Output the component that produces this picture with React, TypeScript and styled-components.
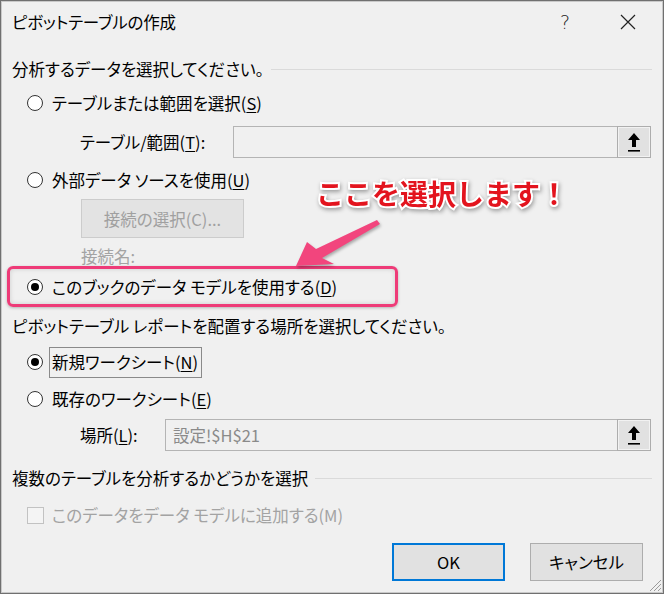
import React from "react";
import styled, { createGlobalStyle } from "styled-components";

const Global = createGlobalStyle`
  html, body { margin: 0; padding: 0; background: #f0f0f0; }
  body {
    font-family: "Noto Sans CJK JP", "Noto Sans", sans-serif;
    font-feature-settings: "palt";
    color: #000;
  }
  * { box-sizing: border-box; }
`;

const Window = styled.div`
  position: relative;
  width: 664px;
  height: 594px;
  background: #f0f0f0;
  border: 1px solid #707070;
  box-shadow: inset 0 0 0 1px #c9c9c9;
  display: flex;
  flex-direction: column;
  overflow: hidden;
`;

const TitleBar = styled.div`
  height: 42px;
  display: flex;
  align-items: center;
  padding: 0 12px 0 11px;
  gap: 17px;
`;

const Title = styled.div`
  flex: 1;
  font-size: 16.5px;
  letter-spacing: -0.2px;
`;

const TitleButton = styled.div`
  width: 46px;
  height: 32px;
  display: flex;
  align-items: center;
  justify-content: center;
  font-family: "DejaVu Sans", sans-serif;
  font-weight: 300;
  font-size: 19px;
  color: #222;
`;

const Section = styled.div<{ $top: number }>`
  margin-top: ${(p) => p.$top}px;
  height: 24px;
  display: flex;
  align-items: center;
  padding: 0 11px 0 11px;
  font-size: 16.5px;
  white-space: nowrap;
`;

const SectionLine = styled.div`
  flex: 1;
  height: 1px;
  background: #dadada;
  margin-left: 7px;
`;

const OptionRow = styled.div<{ $top: number; $height?: number; $indent?: number }>`
  margin-top: ${(p) => p.$top}px;
  height: ${(p) => p.$height ?? 24}px;
  display: flex;
  align-items: center;
  padding-left: ${(p) => p.$indent ?? 26}px;
  font-size: 16.5px;
  white-space: nowrap;
`;

const Radio = styled.span<{ $checked?: boolean }>`
  width: 16px;
  height: 16px;
  border-radius: 50%;
  border: 1px solid #333;
  background: #fff;
  display: inline-flex;
  align-items: center;
  justify-content: center;
  margin-right: 9px;
  flex: none;
  &::after {
    content: "";
    width: 8px;
    height: 8px;
    border-radius: 50%;
    background: ${(p) => (p.$checked ? "#000" : "transparent")};
  }
`;

const CheckBox = styled.span`
  width: 17px;
  height: 17px;
  border: 1px solid #c2c2c2;
  background: #f4f4f4;
  margin-right: 8px;
  flex: none;
`;

const Label = styled.span<{ $disabled?: boolean }>`
  color: ${(p) => (p.$disabled ? "#a3a3a3" : "#000")};
`;

const FocusLabel = styled.span`
  display: inline-flex;
  align-items: center;
  height: 31px;
  padding: 0 3px 0 2px;
  margin-left: -3px;
  border: 1px solid #8a8a8a;
`;

const Key = styled.span`
  text-decoration: underline;
  text-underline-offset: 2px;
`;

const FieldRow = styled.div<{ $top: number; $labelWidth: number }>`
  margin-top: ${(p) => p.$top}px;
  height: 32px;
  display: grid;
  grid-template-columns: ${(p) => p.$labelWidth}px 1fr 34px;
  align-items: stretch;
  padding: 0 12px 0 79px;
  font-size: 16.5px;
`;

const FieldLabel = styled.div`
  display: flex;
  align-items: center;
  white-space: nowrap;
`;

const FieldInput = styled.div`
  border: 1px solid #b4b4b4;
  border-right: none;
  background: #f0f0f0;
  display: flex;
  align-items: center;
  padding-left: 7px;
  color: #8a8a8a;
  font-size: 16.5px;
`;

const PickButton = styled.div`
  border: 1px solid #adadad;
  background: #e1e1e1;
  box-shadow: inset 0 0 0 1px #f2f2f2;
  display: flex;
  align-items: center;
  justify-content: center;
`;

const ConnButton = styled.div`
  margin: 7px 0 0 80px;
  width: 163px;
  height: 39px;
  border: 1px solid #cccccc;
  background: #e3e3e3;
  color: #a0a0a0;
  font-size: 16.5px;
  display: flex;
  align-items: center;
  justify-content: center;
`;

const Highlight = styled.div`
  margin: -1px 0 0 6px;
  width: 391px;
  height: 41px;
  border: 3px solid #ee3b78;
  border-radius: 6px;
  box-shadow: 0 1px 3px rgba(0, 0, 0, 0.25), inset 0 0 5px rgba(0, 0, 0, 0.14);
  display: flex;
  align-items: center;
  padding-left: 17px;
  font-size: 16.5px;
  white-space: nowrap;
`;

const ButtonRow = styled.div`
  margin-top: 16px;
  height: 38px;
  display: flex;
  justify-content: flex-end;
  gap: 25px;
  padding-right: 20px;
`;

const DialogButton = styled.div<{ $default?: boolean }>`
  width: 113px;
  height: 38px;
  background: #e1e1e1;
  border: ${(p) => (p.$default ? "2px solid #0078d7" : "1px solid #adadad")};
  display: flex;
  align-items: center;
  justify-content: center;
  font-size: 16.5px;
`;

const Callout = styled.div`
  position: absolute;
  left: 315px;
  top: 172px;
  font-size: 28px;
  font-weight: 700;
  font-feature-settings: normal;
  color: #e3141e;
  -webkit-text-stroke: 4px #ffffff;
  paint-order: stroke fill;
  filter: drop-shadow(1px 2px 2px rgba(0, 0, 0, 0.35));
  white-space: nowrap;
`;

const ArrowSvg = styled.svg`
  position: absolute;
  left: 290px;
  top: 212px;
  filter: drop-shadow(1px 2px 1.5px rgba(0, 0, 0, 0.3));
`;

const Grip = styled.svg`
  position: absolute;
  right: 1px;
  bottom: 1px;
`;

const UpArrow = () => (
  <svg width="14" height="20" viewBox="0 0 14 20">
    <path d="M7 1 L13 8 L9 8 L9 15 L5 15 L5 8 L1 8 Z" fill="#000" />
    <rect x="1" y="18" width="12" height="1.6" fill="#000" />
  </svg>
);

export default function App() {
  return (
    <>
      <Global />
      <Window>
        <TitleBar>
          <Title>ピボットテーブルの作成</Title>
          <TitleButton>?</TitleButton>
          <TitleButton>
            <svg width="16" height="16" viewBox="0 0 16 16">
              <path d="M1 1 L15 15 M15 1 L1 15" stroke="#222" strokeWidth="1.2" />
            </svg>
          </TitleButton>
        </TitleBar>

        <Section $top={14}>
          分析するデータを選択してください。
          <SectionLine />
        </Section>

        <OptionRow $top={10}>
          <Radio />
          <Label>
            テーブルまたは範囲を選択(<Key>S</Key>)
          </Label>
        </OptionRow>

        <FieldRow $top={11} $labelWidth={153}>
          <FieldLabel>
            テーブル/範囲(<Key>T</Key>):
          </FieldLabel>
          <FieldInput />
          <PickButton>
            <UpArrow />
          </PickButton>
        </FieldRow>

        <OptionRow $top={10}>
          <Radio />
          <Label>
            外部データ&nbsp;ソースを使用(<Key>U</Key>)
          </Label>
        </OptionRow>

        <ConnButton>接続の選択(C)...</ConnButton>

        <OptionRow $top={7} $height={22} $indent={80}>
          <Label $disabled>接続名:</Label>
        </OptionRow>

        <Highlight>
          <Radio $checked />
          <Label>
            このブックのデータ モデルを使用する(<Key>D</Key>)
          </Label>
        </Highlight>

        <Section $top={7}>ピボットテーブル レポートを配置する場所を選択してください。</Section>

        <OptionRow $top={8} $height={32}>
          <Radio $checked />
          <FocusLabel>
            新規ワークシート(<Key>N</Key>)
          </FocusLabel>
        </OptionRow>

        <OptionRow $top={9}>
          <Radio />
          <Label>
            既存のワークシート(<Key>E</Key>)
          </Label>
        </OptionRow>

        <FieldRow $top={8} $labelWidth={85}>
          <FieldLabel>
            場所(<Key>L</Key>):
          </FieldLabel>
          <FieldInput>設定!$H$21</FieldInput>
          <PickButton>
            <UpArrow />
          </PickButton>
        </FieldRow>

        <Section $top={15}>
          複数のテーブルを分析するかどうかを選択
          <SectionLine />
        </Section>

        <OptionRow $top={13}>
          <CheckBox />
          <Label $disabled>このデータをデータ モデルに追加する(M)</Label>
        </OptionRow>

        <ButtonRow>
          <DialogButton $default>OK</DialogButton>
          <DialogButton>キャンセル</DialogButton>
        </ButtonRow>

        <Callout>ここを選択します！</Callout>

        <ArrowSvg width="100" height="60" viewBox="0 0 100 60">
          <path
            d="M5 53 L16 29 L25 36 L86 7 L89 11 L31 45 L43 51 Z"
            fill="#f2457d"
          />
        </ArrowSvg>

        <Grip width="14" height="14" viewBox="0 0 14 14">
          <path d="M13 2 L2 13 M13 6 L6 13 M13 10 L10 13" stroke="#9a9a9a" strokeWidth="1" />
        </Grip>
      </Window>
    </>
  );
}
